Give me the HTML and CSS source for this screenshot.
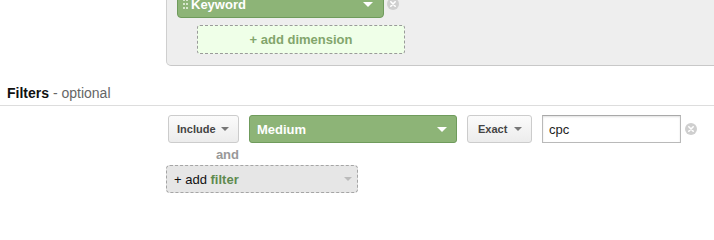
FILE: index.html
```html
<!DOCTYPE html>
<html>
<head>
<meta charset="utf-8">
<link rel="stylesheet" href="styles.css">
</head>
<body>
<div class="dims">
  <div class="dim-row">
    <div class="pill green keyword">
      <svg class="grip" width="5" height="10" viewBox="0 0 5 10"><g fill="#d6e6cc"><rect x="0" y="0" width="2" height="2"/><rect x="3" y="0" width="2" height="2"/><rect x="0" y="4" width="2" height="2"/><rect x="3" y="4" width="2" height="2"/><rect x="0" y="8" width="2" height="2"/><rect x="3" y="8" width="2" height="2"/></g></svg>
      <span class="label">Keyword</span>
      <span class="arrow white"></span>
    </div>
    <span class="remove"><svg width="12" height="12" viewBox="0 0 12 12"><circle cx="6" cy="6" r="6" fill="#cfcfcf"/><path d="M3.8 3.8 L8.2 8.2 M8.2 3.8 L3.8 8.2" stroke="#fff" stroke-width="1.6" stroke-linecap="round"/></svg></span>
  </div>
  <div class="add-dim">+ add dimension</div>
</div>

<div class="section-head"><span class="title">Filters</span> <span class="opt">- optional</span></div>

<div class="filters">
  <div class="filter-row">
    <div class="btn include"><span>Include</span><span class="arrow grey"></span></div>
    <div class="pill green medium"><span class="label">Medium</span><span class="arrow white"></span></div>
    <div class="btn exact"><span>Exact</span><span class="arrow grey"></span></div>
    <div class="input">cpc</div>
    <span class="remove"><svg width="12" height="12" viewBox="0 0 12 12"><circle cx="6" cy="6" r="6" fill="#cfcfcf"/><path d="M3.8 3.8 L8.2 8.2 M8.2 3.8 L3.8 8.2" stroke="#fff" stroke-width="1.6" stroke-linecap="round"/></svg></span>
  </div>
  <div class="and">and</div>
  <div class="add-filter"><span>+ add <b>filter</b></span><span class="arrow light"></span></div>
</div>
</body>
</html>
```

FILE: styles.css
```css
* { box-sizing: border-box; }
body {
  margin: 0;
  font-family: "Liberation Sans", Arial, sans-serif;
  background: #fff;
  color: #222;
  overflow: hidden;
}
.dims {
  margin: -10px 0 0 166px;
  background: #eeeeee;
  border-left: 1px solid #cfcfcf;
  border-bottom: 1px solid #c8c8c8;
  border-bottom-left-radius: 5px;
  padding: 0 0 11px 10px;
}
.dim-row {
  display: flex;
  align-items: center;
}
.pill {
  height: 28px;
  border-radius: 3px;
  display: flex;
  align-items: center;
  justify-content: space-between;
}
.green {
  background: #8db477;
  border: 1px solid #6f9b5c;
  color: #fff;
  font-weight: bold;
  font-size: 13px;
}
.keyword {
  width: 207px;
  padding: 0 10px 0 5px;
  border-radius: 0 0 4px 4px;
}
.keyword .grip { margin-right: 3px; }
.keyword .label { flex: 1; }
.medium {
  width: 208px;
  padding: 0 9px 0 7px;
  margin-left: 10px;
}
.arrow {
  width: 0;
  height: 0;
  border-left: 4px solid transparent;
  border-right: 4px solid transparent;
  border-top: 4px solid #fff;
  display: inline-block;
}
.arrow.white { border-top-color: #fff; border-left-width: 5px; border-right-width: 5px; border-top-width: 5px; }
.arrow.grey { border-top-color: #777; }
.arrow.light { border-top-color: #bbb; }
.remove {
  display: inline-flex;
  margin-left: 3px;
}
.add-dim {
  margin: 7px 0 0 20px;
  width: 208px;
  height: 29px;
  border: 1px dashed #9a9a9a;
  border-radius: 3px;
  background: #efffe8;
  color: #82a56c;
  font-weight: bold;
  font-size: 13px;
  display: flex;
  align-items: center;
  justify-content: center;
}
.section-head {
  margin-top: 19px;
  padding: 0 0 4px 7px;
  border-bottom: 1px solid #dddddd;
  font-size: 14px;
  line-height: 16px;
}
.section-head .title { font-weight: bold; color: #111; }
.section-head .opt { color: #666; }
.filters {
  margin: 9px 0 0 166px;
}
.filter-row {
  display: flex;
  align-items: center;
}
.btn {
  height: 28px;
  border: 1px solid #cccccc;
  border-radius: 3px;
  background: linear-gradient(#fbfbfb, #ececec);
  font-size: 11px;
  font-weight: bold;
  color: #444;
  display: flex;
  align-items: center;
  justify-content: space-between;
  padding: 0 9px 0 8px;
}
.include { width: 71px; margin-left: 2px; }
.exact { width: 65px; margin-left: 10px; padding-left: 10px; }
.input {
  margin-left: 10px;
  width: 139px;
  height: 28px;
  border: 1px solid #b9b9b9;
  border-top-color: #a9a9a9;
  box-shadow: inset 0 1px 2px rgba(0,0,0,0.12);
  background: #fff;
  font-size: 13px;
  color: #222;
  display: flex;
  align-items: center;
  padding-left: 6px;
}
.filter-row .remove { margin-left: 4px; }
.and {
  width: 73px;
  text-align: right;
  margin-top: 5px;
  font-size: 13px;
  line-height: 14px;
  font-weight: bold;
  color: #999;
}
.add-filter {
  margin-top: 3px;
  width: 192px;
  height: 28px;
  border: 1px dashed #a5a5a5;
  border-radius: 4px;
  background: #e6e6e6;
  font-size: 13px;
  color: #111;
  display: flex;
  align-items: center;
  justify-content: space-between;
  padding: 0 5px 0 7px;
}
.add-filter b { color: #5f8a4f; }
```
